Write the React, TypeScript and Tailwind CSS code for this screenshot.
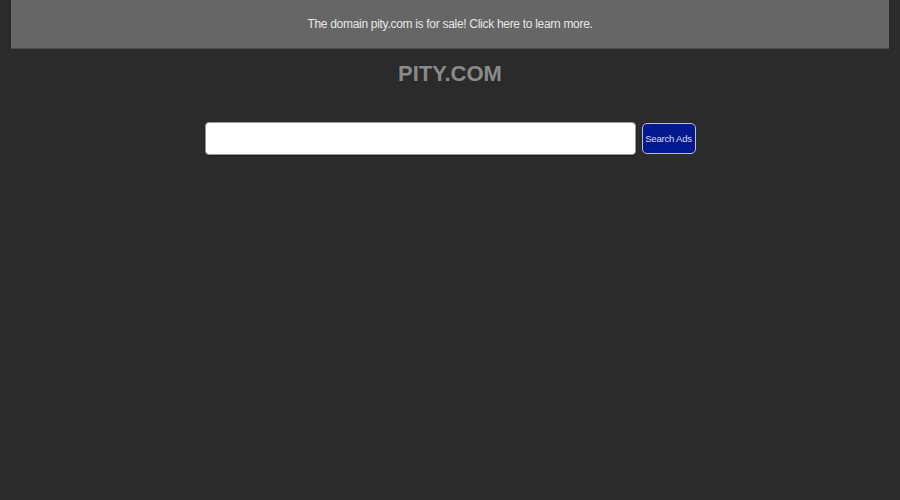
export default function App() {
  return (
    <div className="min-h-[500px] bg-[#2b2b2b] font-['Liberation_Sans',Arial,sans-serif]">
      {/* Sale banner */}
      <div className="mx-[11px] h-[49px] bg-[#666666] border-b border-[#4a4a4a] flex items-center justify-center">
        <a href="#" className="text-[12px] tracking-[-0.3px] text-[#e6e6e6]">
          The domain pity.com is for sale! Click here to learn more.
        </a>
      </div>

      {/* Title */}
      <div className="pt-[11px] text-center">
        <h1 className="text-[22px] leading-[28px] font-bold text-[#8a8a8a]">PITY.COM</h1>
      </div>

      {/* Search */}
      <div className="mt-[34px] flex justify-center items-center gap-[6px]">
        <input
          type="text"
          className="w-[431px] h-[33px] bg-white rounded-[4px] border border-[#9a9a9a] shadow-[0_1px_2px_rgba(0,0,0,0.4)] outline-none px-2"
        />
        <button className="w-[54px] h-[31px] bg-[#02198f] border border-[#b9bfd6] rounded-[5px] text-[9.5px] tracking-[-0.2px] text-[#d8dcf0] leading-none">
          Search Ads
        </button>
      </div>
    </div>
  );
}
